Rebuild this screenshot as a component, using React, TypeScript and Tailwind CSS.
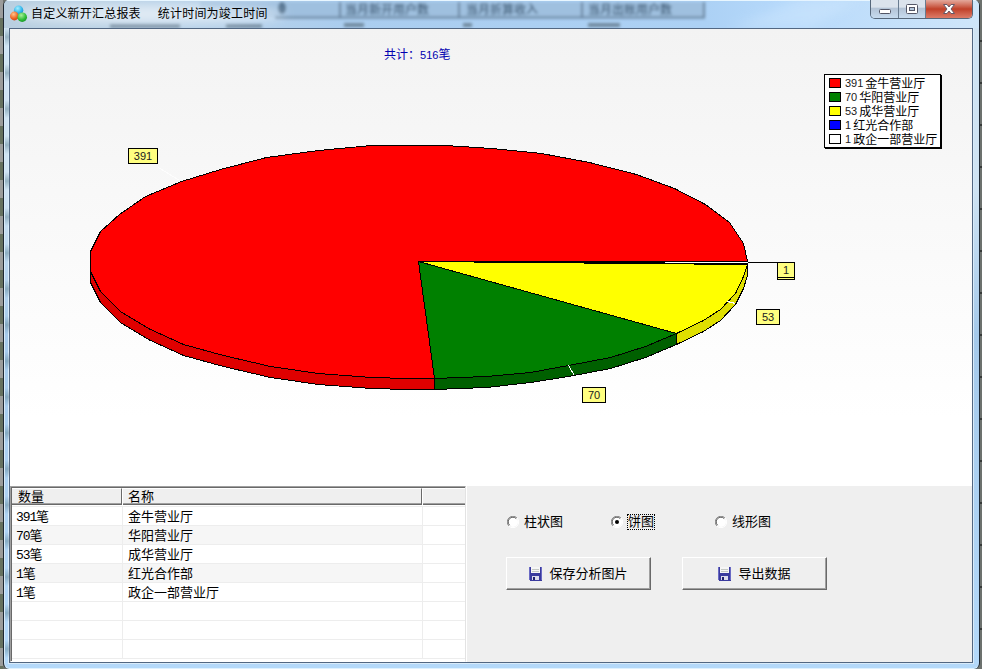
import React from "react";

const cjk = "font-['Liberation_Sans','Noto_Sans_CJK_SC',sans-serif]";

const rim =
  "747,261 743,243 729,222 705,204 674,188 636,174 589,162 541,153 491,148 445,145 371,145 318,150 266,157 220,169 181,181 145,196 119,214 100,231 90,251 90,271 100,291 120,311 148,328 183,344 223,355 270,366 318,373 371,377 408,378 434,378";

const legend = [
  { n: "391", name: "金牛营业厅", color: "bg-[#ff0000]" },
  { n: "70", name: "华阳营业厅", color: "bg-[#008000]" },
  { n: "53", name: "成华营业厅", color: "bg-[#ffff00]" },
  { n: "1", name: "红光合作部", color: "bg-[#0000ff]" },
  { n: "1", name: "政企一部营业厅", color: "bg-white" },
];

function TitleIcon() {
  return (
    <svg width="18" height="18" viewBox="0 0 18 18">
      <defs>
        <radialGradient id="blue" cx=".4" cy=".3" r=".8"><stop offset="0" stopColor="#a5efff" /><stop offset=".6" stopColor="#2fb4ea" /><stop offset="1" stopColor="#1580c0" /></radialGradient>
        <radialGradient id="orange" cx=".4" cy=".3" r=".8"><stop offset="0" stopColor="#ffc58c" /><stop offset=".6" stopColor="#ee6424" /><stop offset="1" stopColor="#bd3b10" /></radialGradient>
        <radialGradient id="green" cx=".4" cy=".3" r=".8"><stop offset="0" stopColor="#a9f09a" /><stop offset=".6" stopColor="#2fbd38" /><stop offset="1" stopColor="#128a24" /></radialGradient>
      </defs>
      <circle cx="8.6" cy="5.2" r="4.7" fill="url(#blue)" />
      <circle cx="4.4" cy="11" r="4.4" fill="url(#orange)" />
      <circle cx="12.2" cy="12.2" r="4.8" fill="url(#green)" />
    </svg>
  );
}

function Disk() {
  return (
    <svg width="13" height="14" viewBox="0 0 13 14" shapeRendering="crispEdges">
      <path d="M0 0h13v14H1L0 13z" fill="#3a3a9e" />
      <path d="M0 0h1v13H0zM12 0h1v13h-1z" fill="#6a6ac4" />
      <path d="M2 0h9v6H2z" fill="#f6f6f6" />
      <path d="M3 2h7v1H3zM3 4h7v1H3z" fill="#c4c8c4" />
      <path d="M3 9h7v4H3z" fill="#dcdcec" />
      <path d="M4 10h2v3H4z" fill="#20206e" />
    </svg>
  );
}

/* Blurred report table that shows through the glass title bar */
function GlassBackdrop() {
  return (
    <svg className="absolute left-0 top-0" width="975" height="28" viewBox="4 0 975 28">
      <defs>
        <filter id="soft" x="-20%" y="-50%" width="140%" height="200%"><feGaussianBlur stdDeviation="1.7" /></filter>
        <filter id="haze" x="-20%" y="-80%" width="140%" height="260%"><feGaussianBlur stdDeviation="6" /></filter>
        <linearGradient id="glass" x1="0" x2="1">
          <stop offset="0" stopColor="#b9cfe0" /><stop offset=".25" stopColor="#b4d0ea" /><stop offset=".35" stopColor="#aacdef" /><stop offset=".72" stopColor="#acd1f5" /><stop offset=".8" stopColor="#b6d9fb" /><stop offset="1" stopColor="#cfe6fa" />
        </linearGradient>
      </defs>
      <rect x="4" width="975" height="28" fill="url(#glass)" />
      <g filter="url(#soft)">
        <rect x="200" y="2" width="504" height="15" fill="#9fc0df" />
        <path d="M275 17.500H704V2M340 2v15M459 2v15M582 2v15" fill="none" stroke="#66819b" strokeWidth="2" />
        <g className="font-['Noto_Sans_CJK_SC',sans-serif]" fontSize="12" fontWeight="700" fill="#3c5872" opacity=".8">
          <text x="345" y="14">当月新开用户数</text>
          <text x="466" y="14">当月折算收入</text>
          <text x="588" y="14">当月出账用户数</text>
        </g>
        <ellipse cx="282" cy="8" rx="4" ry="6" fill="#52728f" />
        <path d="M344 25h20M463 25h9M588 25h32M110 26h70M226 26h36" stroke="#71899f" strokeWidth="4" />
      </g>
      <ellipse cx="150" cy="14" rx="135" ry="9" fill="#fff" opacity=".6" filter="url(#haze)" />
      <path d="M4 .5h975" stroke="#e8f6ff" strokeWidth="1" />
      <path d="M730 28 800 0h60l-50 28z" fill="#d9edff" opacity=".35" filter="url(#haze)" />
    </svg>
  );
}

function WindowButtons() {
  return (
    <div className="relative mr-[6px] flex h-[19px] w-[103px] overflow-hidden rounded-b-[5px] border border-t-0 border-[#56677a]">
      <div className="flex w-[28px] items-center justify-center border-r border-[#697c90] bg-linear-to-b from-[#dbe3ec] from-40% via-[#b3c3d5] via-45% to-[#c7dbef]">
        <svg width="14" height="14" viewBox="0 0 14 14"><rect x="1.500" y="7.500" width="11" height="4" rx="1" fill="#fff" stroke="#535666" /></svg>
      </div>
      <div className="flex w-[27px] items-center justify-center border-r border-[#697c90] bg-linear-to-b from-[#dbe3ec] from-40% via-[#b3c3d5] via-45% to-[#c7dbef]">
        <svg width="14" height="12" viewBox="0 0 14 12"><rect x="1.500" y="1.500" width="11" height="9" rx="1" fill="#fff" stroke="#535666" /><rect x="4.500" y="4.500" width="5" height="3" fill="#b5c8dc" stroke="#535666" /></svg>
      </div>
      <div className="flex flex-1 items-center justify-center bg-linear-to-b from-[#e3a89c] from-0% via-[#c04029] via-50% to-[#dd7b68]">
        <svg width="14" height="12" viewBox="0 0 14 12"><path d="m1.500 1.500h3.500l2 2.500 2-2.500h3.500L9 6l3.500 4.500H9L7 8l-2 2.500H1.500L5 6z" fill="#fff" stroke="#665766" /></svg>
      </div>
    </div>
  );
}

function Chart() {
  return (
    <div className="relative h-[457px] bg-linear-to-b from-[#f3f3f3] to-white to-85%">
      <svg className="block" width="962" height="457" viewBox="10 29 962 457" shapeRendering="crispEdges">
        <g stroke="#000" strokeWidth="1" transform="translate(.5 .5)">
          <polygon fill="#df0000" points="90,271 100,291 120,311 148,328 183,344 223,355 270,366 318,373 371,377 408,378 434,378 434,389 408,389 371,388 318,384 270,377 223,366 183,355 148,339 120,322 100,302 90,282" />
          <polygon fill="#006000" points="434,378 486,376 530,372 568,365 610,357 645,346 676,333 676,344 645,357 610,368 568,376 530,382 486,387 434,389" />
          <polygon fill="#dfdf00" points="676,333 703,320 720,309 735,293 743,276 747,264 747,275 743,288 735,304 720,320 703,331 676,344" />
          <polygon fill="#ff0000" points={`418,261 ${rim}`} />
          <polygon fill="#008000" points="418,261 434,378 486,376 530,372 568,365 610,357 645,346 676,333" />
          <polygon fill="#ffff00" points="418,261 676,333 703,320 720,309 735,293 743,276 747,264" />
          <path d="M418 261H747M473 262H664M583 263H693M693 264H747" fill="none" />
          <path d="M665 262H747" stroke="#fff" />
          <path d="M693 263H747" />
          <path d="M747 262H786" />
          <path d="m568 365 6 10M727 301l8 2" stroke="#fff" />
          <path d="m158 167 21 13" stroke="#fdfdfd" />
        </g>
      </svg>
      <div className={`absolute left-[374px] top-[17px] text-[12px] leading-[18px] text-[#0000b0] ${cjk}`}>
        共计：<span className="text-[11px]">516</span>笔
      </div>
      <Mark className="left-[118px] top-[119px] w-[30px]">391</Mark>
      <Mark className="left-[767px] top-[235px] w-[18px]">{""}</Mark>
      <Mark className="left-[767px] top-[233px] w-[18px]">1</Mark>
      <Mark className="left-[746px] top-[280px] w-[24px]">53</Mark>
      <Mark className="left-[572px] top-[358px] w-[24px]">70</Mark>
      <div className={`absolute left-[814px] top-[45px] h-[74px] w-[117px] border border-black bg-white pl-[4px] pt-[1px] shadow-[1px_1px_0_#000] ${cjk}`}>
        {legend.map((l) => (
          <div key={l.name} className="flex h-[14px] items-center whitespace-nowrap text-[12px] leading-[14px] text-black">
            <i className={`mr-[4px] h-[10px] w-[12px] shrink-0 border border-black ${l.color}`} />
            <span className="mr-[2px] text-[11px] text-[#202020]">{l.n}</span>
            <span className="pt-px">{l.name}</span>
          </div>
        ))}
      </div>
    </div>
  );
}

function Mark({ className, children }: { className: string; children: React.ReactNode }) {
  return (
    <div className={`absolute flex h-[16px] items-center justify-center border border-black bg-[#ffff80] font-['Liberation_Sans',sans-serif] text-[11px] leading-none text-[#202020] ${className}`}>
      {children}
    </div>
  );
}

function HeaderCell({ className, children }: { className: string; children?: React.ReactNode }) {
  return (
    <div className={`flex h-[17px] items-center border-t border-t-white bg-[#efefef] shadow-[inset_0_-1px_0_#696969,inset_0_-2px_0_#a0a0a0] ${className}`}>
      {children}
    </div>
  );
}

function Table() {
  const rows = [...legend, null, null, null];
  return (
    <div className={`h-[176px] w-[456px] shrink-0 border-b border-l border-r border-t border-b-white border-l-[#a0a0a0] border-r-[#e3e3e3] border-t-[#a0a0a0] text-[13px] text-black ${cjk}`}>
      <div className="h-[174px] overflow-hidden border-l border-t border-[#696969] bg-white">
        <div className="flex">
          <HeaderCell className="w-[110px] border-r border-r-[#696969] pl-[6px]">数量</HeaderCell>
          <HeaderCell className="w-[300px] border-l border-r border-l-white border-r-[#696969] pl-[5px]">名称</HeaderCell>
          <HeaderCell className="flex-1 border-l border-l-white" />
        </div>
        <div className="h-[2px] border-b border-[#ededed]" />
        {rows.map((r, i) => (
          <div key={i} className="flex h-[19px] leading-[19px]">
            <div className={`w-[111px] border-b border-r border-[#ededed] pl-[4px] ${i === 1 || i === 3 ? "bg-[#f6f6f6]" : ""}`}>
              {r && (<><span className="font-['Liberation_Mono',monospace] tracking-[-1.1px]">{r.n}</span>笔</>)}
            </div>
            <div className={`w-[300px] border-b border-r border-[#ededed] pl-[5px] ${i === 1 || i === 3 ? "bg-[#f6f6f6]" : ""}`}>{r?.name}</div>
            <div className="flex-1 border-b border-[#ededed]" />
          </div>
        ))}
      </div>
    </div>
  );
}

function Radio({ label, checked }: { label: string; checked?: boolean }) {
  return (
    <label className="flex w-[104px] items-center">
      <svg width="12" height="12" viewBox="0 0 12 12">
        <circle cx="6" cy="6" r="5" fill="#fff" />
        <path d="M1.900 10A5.500 5.500 0 0 1 10 1.900" fill="none" stroke="#8c8c8c" />
        <path d="M2.600 9.200A4.600 4.600 0 0 1 9.200 2.600" fill="none" stroke="#5c5c5c" />
        <path d="M10 1.900A5.500 5.500 0 0 1 1.900 10" fill="none" stroke="#fff" />
        {checked && <circle cx="6" cy="6" r="2" />}
      </svg>
      <span className={`ml-[4px] border border-dotted leading-[14px] ${checked ? "border-black" : "border-transparent"}`}>{label}</span>
    </label>
  );
}

function PushButton({ label }: { label: string }) {
  return (
    <button className="flex h-[33px] w-[145px] items-center justify-center gap-[7px] border border-b-[#696969] border-l-white border-r-[#696969] border-t-white bg-[#efefef] shadow-[inset_-1px_-1px_0_#a0a0a0]">
      <Disk />
      <span>{label}</span>
    </button>
  );
}

export default function App() {
  return (
    <div className="flex h-[669px] w-[982px] overflow-hidden bg-[#70746f]">
      <div className="w-[3px] shrink-0 bg-[repeating-linear-gradient(180deg,#9b9c9b_0px,#9b9c9b_18px,#66715f_18px,#66715f_36px)]" />
      <div className="relative h-[669px] w-[977px] shrink-0 rounded-[6px] border-x border-[#1d2733] bg-linear-to-b from-[#cfe3f3] from-28% via-[#a5c9ea] via-28.500% to-[#b4d9fa] shadow-[inset_1px_0_0_#d8eaf7,inset_0_-1px_0_#dff2ff]">
        <div className="absolute bottom-[8px] left-[1px] top-[28px] w-[4px] bg-[repeating-linear-gradient(180deg,#a9c9dc00_0px,#668a9a88_9px,#a9c9dc00_18px,#a9c9dc00_36px)]" />
        <header className="relative flex h-[28px] items-start justify-between overflow-hidden rounded-t-[5px]">
          <GlassBackdrop />
          <div className={`relative flex items-center pl-[6px] pt-[5px] text-[12px] leading-[18px] text-black ${cjk}`}>
            <TitleIcon />
            <span className="ml-[3px] whitespace-pre tracking-[0.200px]">自定义新开汇总报表</span>
            <span className="ml-[17px] tracking-[0.200px]">统计时间为竣工时间</span>
          </div>
          <WindowButtons />
        </header>
        <main className="ml-[5px] h-[635px] w-[964px] border border-[#526782] bg-[#efefef] shadow-[0_0_0_1px_#d8ebfa]">
          <Chart />
          <section className="flex h-[176px]">
            <Table />
            <div className={`flex-1 border-l border-white pl-[39px] pt-[27px] text-[13px] text-black ${cjk}`}>
              <div className="flex h-[17px] pl-px">
                <Radio label="柱状图" />
                <Radio label="饼图" checked />
                <Radio label="线形图" />
              </div>
              <div className="mt-[27px] flex gap-[31px]">
                <PushButton label="保存分析图片" />
                <PushButton label="导出数据" />
              </div>
            </div>
          </section>
        </main>
      </div>
      <div className="flex-1 bg-[repeating-linear-gradient(180deg,#6c716e_0px,#6c716e_40px,#363a39_40px,#363a39_42px)]" />
    </div>
  );
}
